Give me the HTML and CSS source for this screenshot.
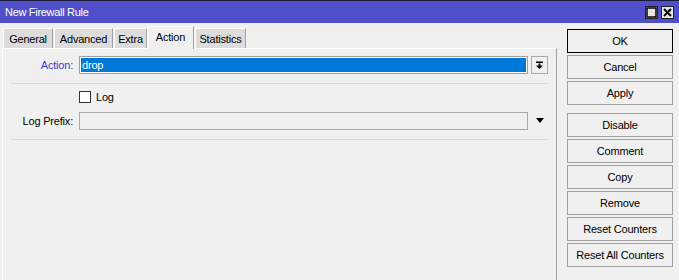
FILE: index.html
```html
<!DOCTYPE html>
<html>
<head>
<meta charset="utf-8">
<link rel="stylesheet" href="styles.css">
</head>
<body>
<div class="window">
  <div class="titlebar">
    <span class="title">New Firewall Rule</span>
    <div class="wbtns">
      <span class="wbtn"><svg width="11" height="11" viewBox="0 0 11 11"><rect x="1" y="1" width="9" height="9" fill="none" stroke="#000" stroke-width="1.5"/></svg></span>
      <span class="wbtn"><svg width="11" height="11" viewBox="0 0 11 11"><path d="M2 2 L9 9 M9 2 L2 9" stroke="#000" stroke-width="2"/></svg></span>
    </div>
  </div>
  <div class="main">
    <div class="left">
      <div class="tabs">
        <div class="tab w-general">General</div>
        <div class="tab w-advanced">Advanced</div>
        <div class="tab w-extra">Extra</div>
        <div class="tab active w-action">Action</div>
        <div class="tab w-stats">Statistics</div>
      </div>
      <div class="panel">
        <div class="row">
          <span class="lbl blue">Action:</span>
          <div class="field selected">drop</div>
          <div class="ddbtn"><svg width="9" height="9" viewBox="0 0 9 9"><rect x="1" y="0.5" width="7" height="1.5" fill="#000"/><rect x="3.5" y="2.5" width="2" height="2" fill="#000"/><path d="M1 4.5 H8 L4.5 8 Z" fill="#000"/></svg></div>
        </div>
        <div class="sep"></div>
        <div class="row">
          <span class="lbl"></span>
          <span class="check"></span>
          <span class="chklbl">Log</span>
        </div>
        <div class="row row3">
          <span class="lbl">Log Prefix:</span>
          <div class="field"></div>
          <div class="ddarrow"><svg width="8" height="5" viewBox="0 0 8 5"><path d="M0 0 H8 L4 5 Z" fill="#000"/></svg></div>
        </div>
        <div class="sep"></div>
      </div>
    </div>
    <div class="buttons">
      <div class="btn default">OK</div>
      <div class="btn">Cancel</div>
      <div class="btn">Apply</div>
      <div class="btn group">Disable</div>
      <div class="btn">Comment</div>
      <div class="btn">Copy</div>
      <div class="btn">Remove</div>
      <div class="btn">Reset Counters</div>
      <div class="btn">Reset All Counters</div>
    </div>
  </div>
</div>
</body>
</html>
```

FILE: styles.css
```css
html, body {
  margin: 0;
  padding: 0;
  height: 100%;
  background: #f0f0f0;
  font-family: "Liberation Sans", Arial, sans-serif;
  font-size: 11px;
  letter-spacing: -0.2px;
  color: #000;
  overflow: hidden;
}

.window {
  height: 100%;
  border-top: 1px solid #1a1a3a;
  box-sizing: border-box;
  display: flex;
  flex-direction: column;
}

.titlebar {
  height: 22px;
  background: #4f4fca;
  display: flex;
  align-items: center;
  justify-content: space-between;
  padding: 0 5px 0 5px;
  flex: none;
}

.title {
  color: #fff;
  font-size: 11px;
  letter-spacing: -0.3px;
}

.wbtns {
  display: flex;
  gap: 3px;
  padding-top: 1px;
}

.wbtn {
  width: 13px;
  height: 13px;
  background: #e6e6e6;
  border: 1px solid #222;
  box-sizing: border-box;
  display: flex;
  align-items: center;
  justify-content: center;
}

.wbtn svg { display: block; }

.main {
  flex: 1;
  display: flex;
  min-height: 0;
}

.left {
  width: 557px;
  display: flex;
  flex-direction: column;
  padding-left: 2px;
  box-sizing: border-box;
}

.tabs {
  display: flex;
  align-items: flex-end;
  padding-top: 3px;
  height: 25px;
  box-sizing: border-box;
  padding-left: 1px;
  gap: 1px;
  position: relative;
  z-index: 1;
}

.tab {
  height: 20px;
  background: #dcdcdc;
  border-top: 1px solid #fff;
  border-left: 1px solid #fff;
  border-right: 1px solid #a0a0a0;
  box-sizing: border-box;
  display: flex;
  align-items: center;
  justify-content: center;
}

.tab.active {
  height: 23px;
  background: #f0f0f0;
  margin-bottom: -1px;
  margin-left: -1px;
  padding-bottom: 3px;
}

.w-general { width: 50px; }
.w-advanced { width: 59px; }
.w-extra { width: 33px; }
.w-action { width: 47px; }
.w-stats { width: 51px; }

.panel {
  flex: 1;
  border-top: 1px solid #fff;
  border-left: 1px solid #fff;
  border-right: 1px solid #a0a0a0;
  padding: 7px 8px 0 8px;
  display: flex;
  flex-direction: column;
}

.row {
  display: flex;
  align-items: center;
  height: 18px;
}

.row3 { margin-top: 6px; }

.lbl {
  width: 62px;
  text-align: right;
  margin-right: 6px;
  flex: none;
}

.lbl.blue { color: #3a3ad8; }

.field {
  flex: 1;
  height: 18px;
  box-sizing: border-box;
  border: 1px solid #a8a8a8;
  background: #f0f0f0;
  padding-left: 2px;
  line-height: 16px;
}

.field.selected {
  background: #0078d7;
  color: #fff;
  border-color: #a0a0a0;
  box-shadow: inset 0 0 0 1px #fff;
}

.ddbtn {
  width: 17px;
  height: 18px;
  box-sizing: border-box;
  margin-left: 3px;
  border: 1px solid #a8a8a8;
  display: flex;
  align-items: center;
  justify-content: center;
  flex: none;
}

.ddarrow {
  width: 17px;
  margin-left: 3px;
  display: flex;
  justify-content: center;
  flex: none;
  padding-bottom: 2px;
}

.ddbtn svg, .ddarrow svg { display: block; }

.sep {
  height: 1px;
  background: #d9d9d9;
  margin-top: 9px;
  margin-bottom: 4px;
}

.check {
  width: 12px;
  height: 12px;
  box-sizing: border-box;
  border: 1px solid #333;
  background: #fff;
  flex: none;
}

.chklbl {
  margin-left: 5px;
}

.buttons {
  width: 106px;
  margin-left: 10px;
  padding-top: 6px;
  display: flex;
  flex-direction: column;
  gap: 2px;
}

.btn {
  height: 24px;
  box-sizing: border-box;
  border: 1px solid #a0a0a0;
  background: #f0f0f0;
  display: flex;
  align-items: center;
  justify-content: center;
}

.btn.default {
  border: 1px solid #000;
}

.btn.group { margin-top: 6px; }
```
